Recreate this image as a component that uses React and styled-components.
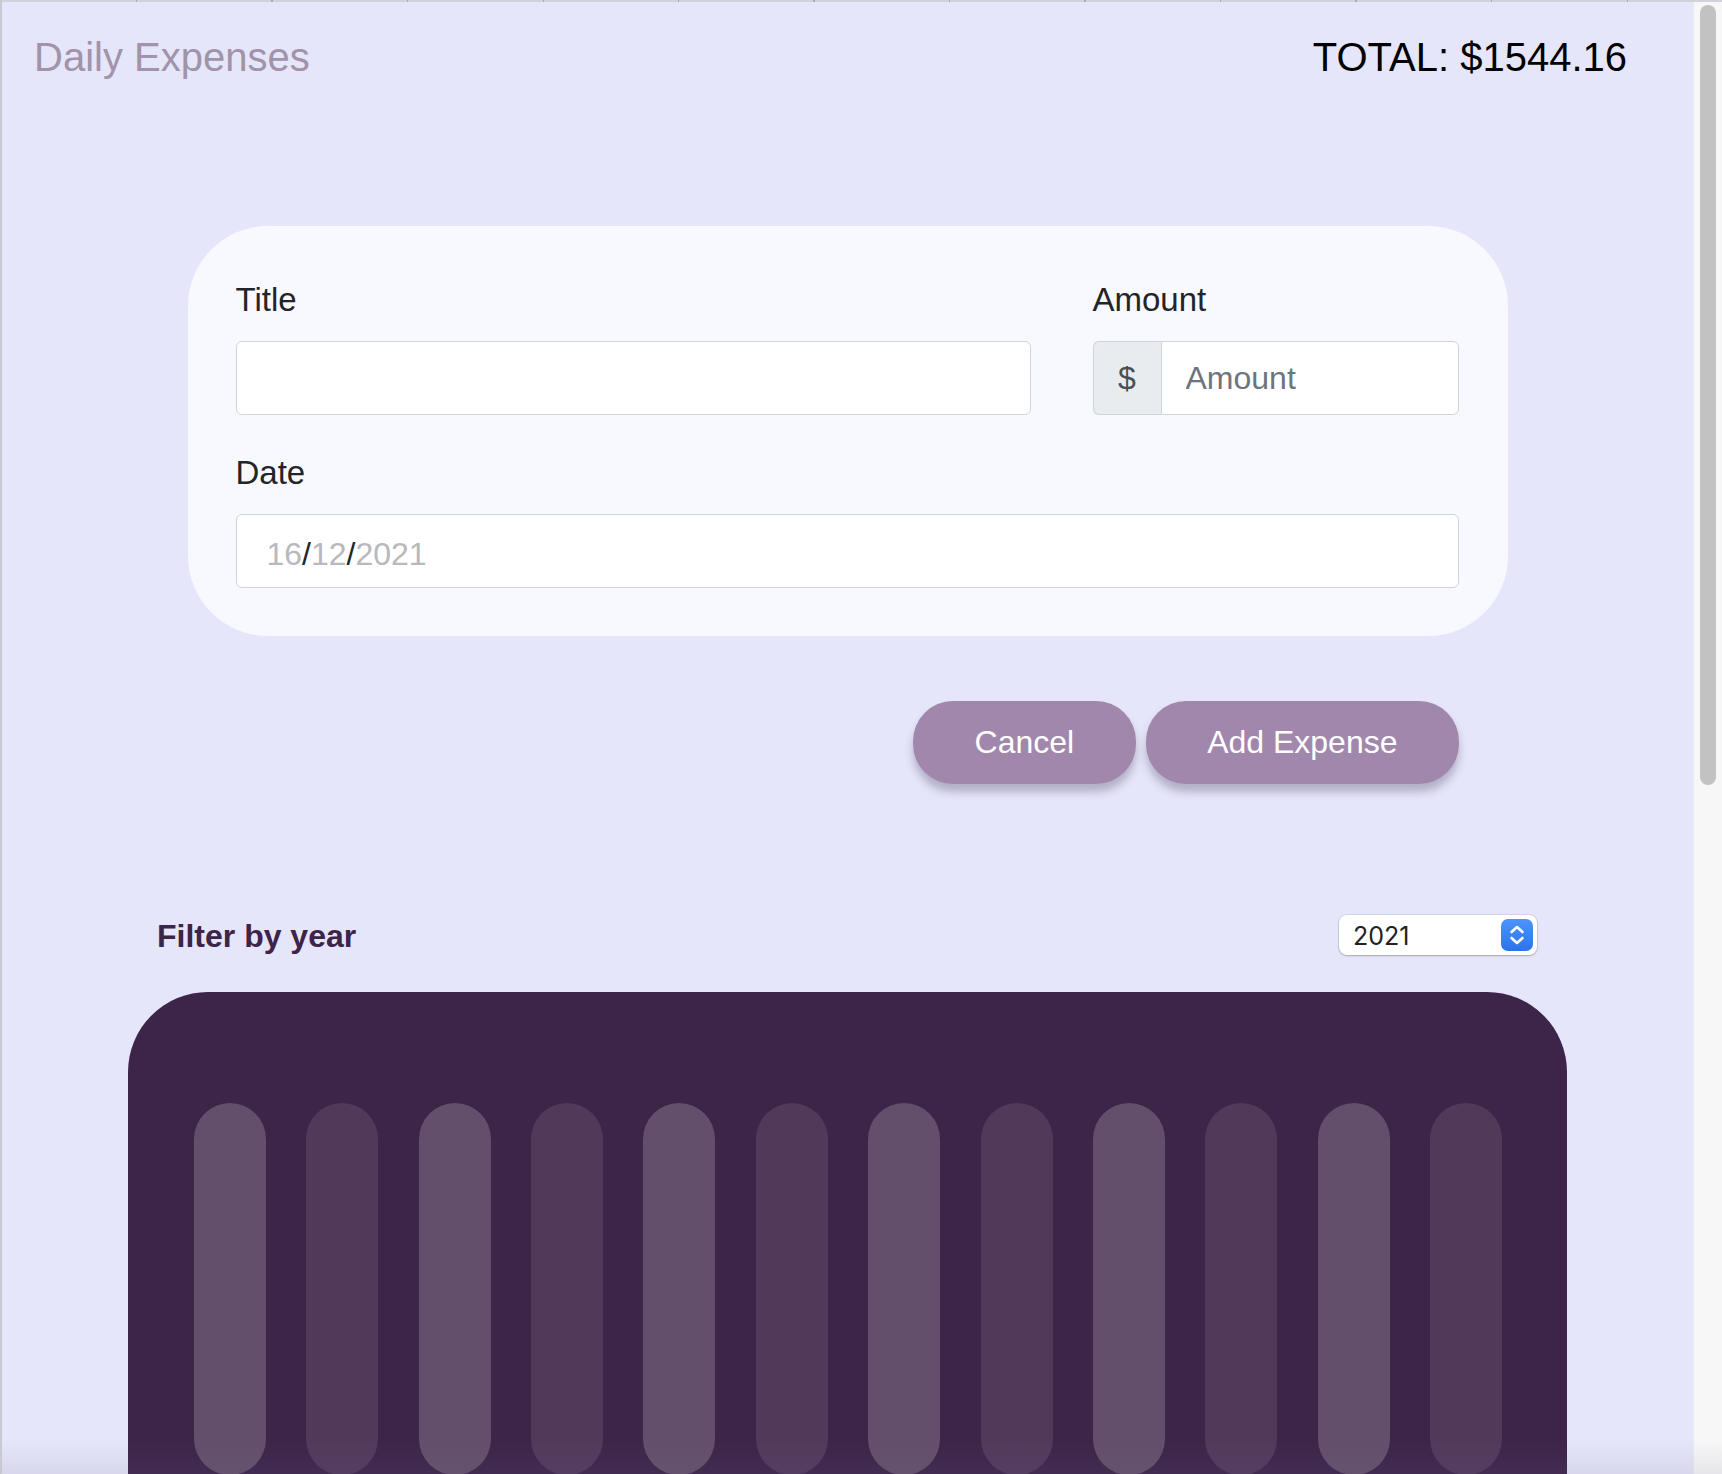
import React from 'react';
import styled, { createGlobalStyle } from 'styled-components';

const FONT = `"Liberation Sans", Arial, Helvetica, sans-serif`;

const GlobalStyle = createGlobalStyle`
  html, body { margin: 0; padding: 0; height: 100%; overflow: hidden; }
  body { font-family: ${FONT}; background: #e6e6fa; }
  #root { height: 100%; }
  *, *::before, *::after { box-sizing: border-box; }
`;

const Frame = styled.div`
  position: relative;
  height: 100vh;
  display: flex;
  flex-direction: column;
  border-left: 2px solid #c9c9d3;
  overflow: hidden;
`;

const TopStrip = styled.div`
  flex: none;
  height: 2px;
  background: repeating-linear-gradient(90deg, #d2d2db 0 134px, #a9a9b3 134px 135.5px);
`;

const Viewport = styled.div`
  flex: 1;
  min-height: 0;
  display: flex;
`;

const Main = styled.main`
  flex: 1;
  min-width: 0;
  overflow: hidden;
  background: #e6e6fa;
`;

const ScrollTrack = styled.div`
  flex: none;
  width: 29px;
  background: #f7f7f7;
  border-left: 1px solid #ececec;
  padding: 3px 6px 0 6px;
`;

const ScrollThumb = styled.div`
  height: 780px;
  border-radius: 8px;
  background: #c2c2c2;
`;

const Header = styled.header`
  display: flex;
  justify-content: space-between;
  align-items: baseline;
  padding: 32px 66px 0 32px;
`;

const Brand = styled.h1`
  margin: 0;
  font-size: 40px;
  line-height: 46px;
  font-weight: 400;
  color: #a193aa;
`;

const Total = styled.h2`
  margin: 0;
  font-size: 40px;
  line-height: 46px;
  font-weight: 400;
  color: #000;
`;

const FormSection = styled.section`
  width: 1320px;
  margin: 146px auto 0;
`;

const Card = styled.form`
  background: #f8f8ff;
  border-radius: 80px;
  padding: 55px 49px 48px 48px;
  display: grid;
  grid-template-columns: 795px 1fr;
  column-gap: 62px;
  row-gap: 39px;
`;

const Field = styled.div`
  grid-column: ${(p) => (p.$wide ? '1 / -1' : 'auto')};
  display: flex;
  flex-direction: column;
`;

const Label = styled.label`
  display: block;
  font-size: 33px;
  line-height: 38px;
  color: #212529;
  margin-bottom: 22px;
`;

const TextInput = styled.input`
  display: block;
  width: 100%;
  height: 74px;
  padding: 12px 24px;
  font-family: ${FONT};
  font-size: 32px;
  line-height: 48px;
  color: #212529;
  background: #fff;
  border: 1px solid #ced4da;
  border-radius: ${(p) => (p.$grouped ? '0 6px 6px 0' : '6px')};
  outline: none;
  &::placeholder { color: #6c757d; }
`;

const InputGroup = styled.div`
  display: flex;
  height: 74px;
`;

const Addon = styled.span`
  flex: none;
  width: 68px;
  display: flex;
  align-items: center;
  justify-content: center;
  font-size: 32px;
  color: #495057;
  background: #e9ecef;
  border: 1px solid #ced4da;
  border-right: none;
  border-radius: 6px 0 0 6px;
`;

const DateBox = styled.div`
  height: 74px;
  display: flex;
  align-items: center;
  padding: 6px 30px 0;
  font-size: 32px;
  background: #fff;
  border: 1px solid #ced4da;
  border-radius: 6px;
`;

const DatePart = styled.span`
  color: ${(p) => (p.$sep ? '#212529' : '#b8b8bd')};
`;

const Actions = styled.div`
  display: flex;
  justify-content: flex-end;
  gap: 10px;
  padding-right: 49px;
  margin-top: 65px;
`;

const Button = styled.button`
  height: 83px;
  padding: 0 ${(p) => (p.$narrow ? '61px' : '62px')};
  border: none;
  border-radius: 40px;
  background: #a287ad;
  color: #fff;
  font-family: ${FONT};
  font-size: 32px;
  box-shadow: 0 8px 8px rgba(60, 50, 80, 0.3);
  cursor: pointer;
`;

const ExpensesSection = styled.section`
  width: 1439px;
  margin: 131px auto 0;
`;

const FilterRow = styled.div`
  height: 40px;
  display: flex;
  align-items: center;
  justify-content: space-between;
  padding: 0 30px 0 29px;
`;

const FilterLabel = styled.span`
  font-size: 32px;
  font-weight: 700;
  color: #3d2449;
  padding-top: 2px;
`;

const SelectBox = styled.div`
  width: 198px;
  height: 40px;
  display: flex;
  align-items: center;
  justify-content: space-between;
  padding: 2px 4px 0 14px;
  background: #fff;
  border-radius: 8px;
  box-shadow: 0 0 0 1px rgba(0, 0, 0, 0.08), 0 1px 2px rgba(0, 0, 0, 0.22);
  font-family: Inter, "Liberation Sans", Arial, sans-serif;
  font-size: 25px;
  color: #222;
`;

const Stepper = styled.span`
  width: 32px;
  height: 32px;
  margin-top: -2px;
  border-radius: 7px;
  background: linear-gradient(180deg, #4d94fb 0%, #2b73ee 100%);
  display: flex;
  align-items: center;
  justify-content: center;
`;

const Chart = styled.div`
  margin-top: 37px;
  height: 700px;
  background: #3d2449;
  border-radius: 80px 80px 0 0;
  padding: 111px 65px 0 66px;
  display: flex;
  justify-content: space-between;
  align-items: flex-start;
`;

const Bar = styled.div`
  width: 72px;
  height: 372px;
  border-radius: 36px;
  background: ${(p) => (p.$light ? '#634f6b' : '#51395a')};
`;

const BottomShade = styled.div`
  position: absolute;
  left: 0;
  right: 0;
  bottom: 0;
  height: 34px;
  pointer-events: none;
  background: linear-gradient(180deg, rgba(110, 105, 140, 0) 0%, rgba(110, 105, 140, 0.12) 100%);
`;

const months = ['Jan', 'Feb', 'Mar', 'Apr', 'May', 'Jun', 'Jul', 'Aug', 'Sep', 'Oct', 'Nov', 'Dec'];

export default function App() {
  return (
    <>
      <GlobalStyle />
      <Frame>
        <TopStrip />
        <Viewport>
          <Main>
            <Header>
              <Brand>Daily Expenses</Brand>
              <Total>TOTAL: $1544.16</Total>
            </Header>

            <FormSection>
              <Card onSubmit={(e) => e.preventDefault()}>
                <Field>
                  <Label htmlFor="title">Title</Label>
                  <TextInput id="title" type="text" />
                </Field>
                <Field>
                  <Label htmlFor="amount">Amount</Label>
                  <InputGroup>
                    <Addon>$</Addon>
                    <TextInput id="amount" $grouped type="text" placeholder="Amount" />
                  </InputGroup>
                </Field>
                <Field $wide>
                  <Label htmlFor="date">Date</Label>
                  <DateBox id="date" role="textbox">
                    <DatePart>16</DatePart>
                    <DatePart $sep>/</DatePart>
                    <DatePart>12</DatePart>
                    <DatePart $sep>/</DatePart>
                    <DatePart>2021</DatePart>
                  </DateBox>
                </Field>
              </Card>
              <Actions>
                <Button type="button">Cancel</Button>
                <Button type="submit" $narrow>Add Expense</Button>
              </Actions>
            </FormSection>

            <ExpensesSection>
              <FilterRow>
                <FilterLabel>Filter by year</FilterLabel>
                <SelectBox>
                  <span>2021</span>
                  <Stepper>
                    <svg width="32" height="32" viewBox="0 0 32 32" fill="none">
                      <path d="M10.5 13 L16 8 L21.5 13" stroke="#fff" strokeWidth="2.6" strokeLinecap="round" strokeLinejoin="round" />
                      <path d="M10.5 19 L16 24 L21.5 19" stroke="#fff" strokeWidth="2.6" strokeLinecap="round" strokeLinejoin="round" />
                    </svg>
                  </Stepper>
                </SelectBox>
              </FilterRow>
              <Chart>
                {months.map((m, i) => (
                  <Bar key={m} title={m} $light={i % 2 === 0} />
                ))}
              </Chart>
            </ExpensesSection>
          </Main>
          <ScrollTrack>
            <ScrollThumb />
          </ScrollTrack>
        </Viewport>
        <BottomShade />
      </Frame>
    </>
  );
}
